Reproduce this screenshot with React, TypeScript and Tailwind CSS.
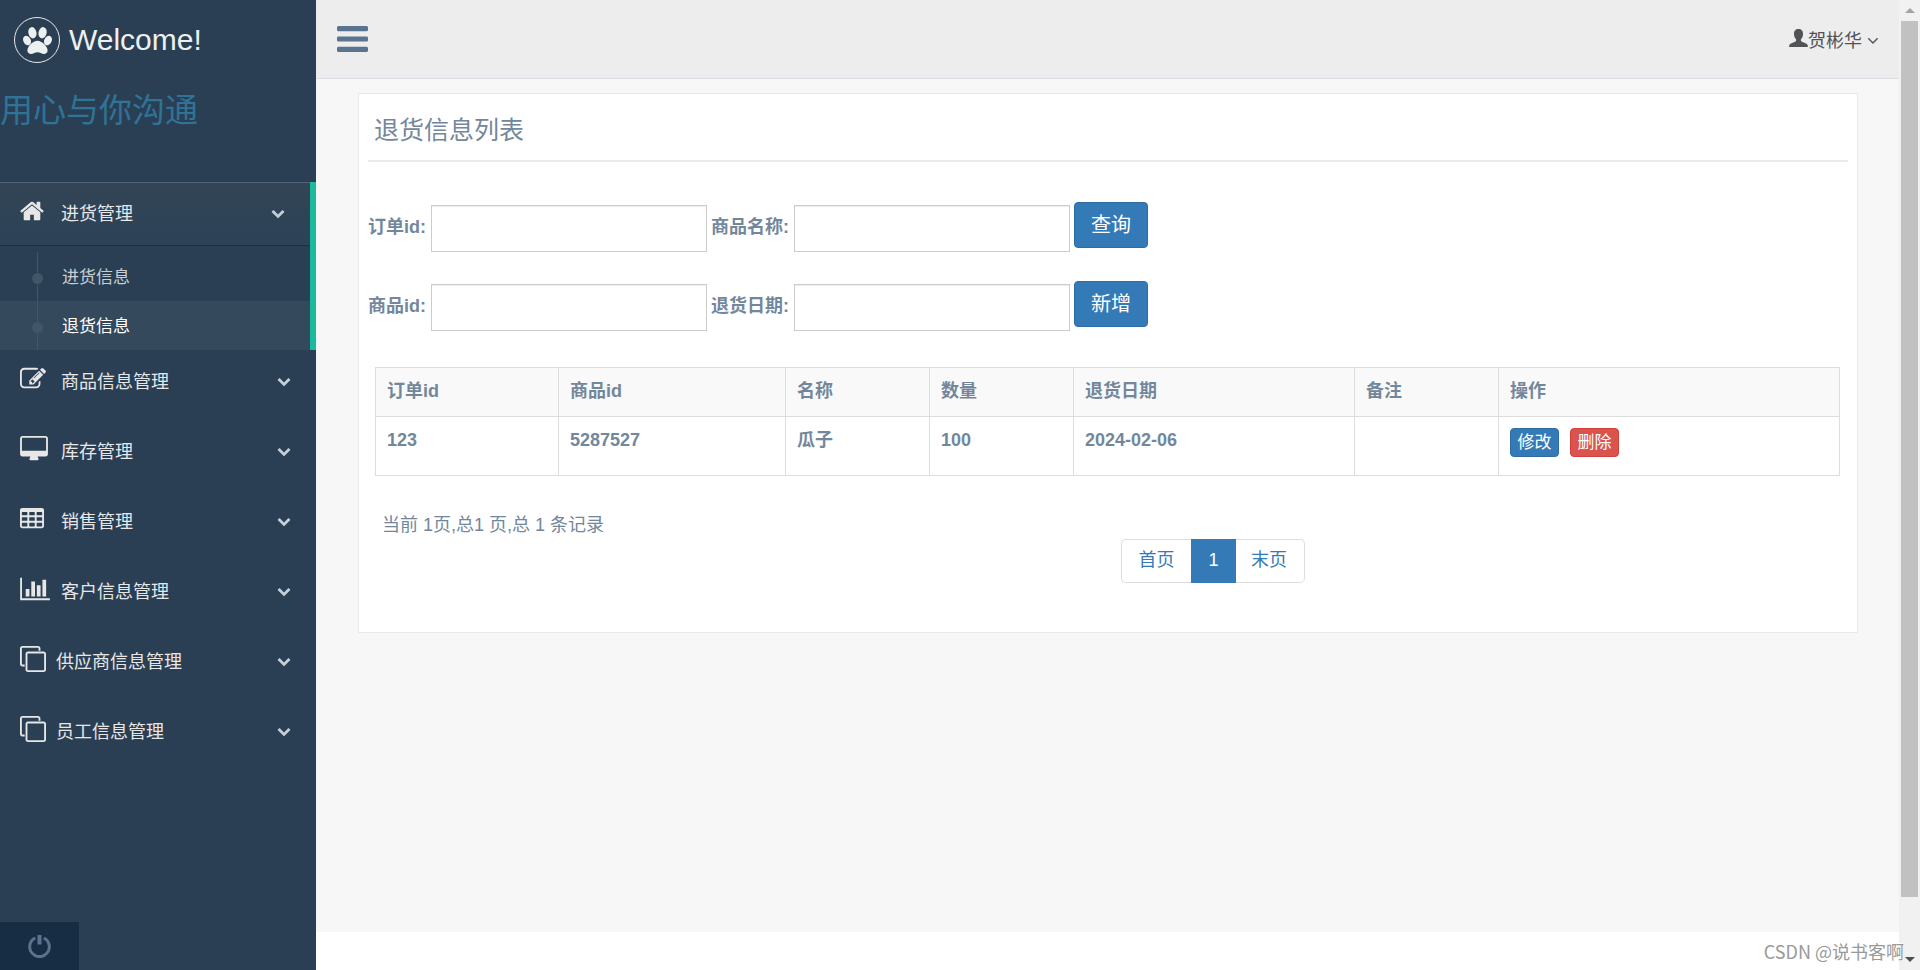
type Glyph = { viewBox: string; d: string };

const glyphs: Record<string, Glyph> = {
  home: {
    viewBox: "64 0 1664 1792",
    d: "M1472 992v480q0 26-19 45t-45 19h-384v-384h-256v384h-384q-26 0-45-19t-19-45v-480q0-1 .5-3t.5-3l575-474 575 474q1 2 1 6zm223-69l-62 74q-8 9-21 11h-3q-13 0-21-7l-692-577-692 577q-12 8-24 7-13-2-21-11l-62-74q-8-10-7-23.5t11-21.5l719-599q32-26 76-26t76 26l244 204v-195q0-14 9-23t23-9h192q14 0 23 9t9 23v408l219 182q10 8 11 21.5t-7 23.5z",
  },
  edit: {
    viewBox: "0 0 1792 1792",
    d: "M888 1184l116-116-152-152-116 116v56h96v96h56zm440-720q-16-16-33 1l-350 350q-17 17-1 33t33-1l350-350q17-17 1-33zm80 594v190q0 119-84.5 203.5t-203.5 84.5h-832q-119 0-203.5-84.5t-84.5-203.5v-832q0-119 84.5-203.5t203.5-84.5h832q63 0 117 25 15 7 18 23 3 17-9 29l-49 49q-14 14-32 8-23-6-45-6h-832q-66 0-113 47t-47 113v832q0 66 47 113t113 47h832q66 0 113-47t47-113v-126q0-13 9-22l64-64q15-15 35-7t20 29zm-96-738l288 288-672 672h-288v-288zm444 132l-92 92-288-288 92-92q28-28 68-28t68 28l152 152q28 28 28 68t-28 68z",
  },
  desktop: {
    viewBox: "0 0 1920 1792",
    d: "M1792 992v-832q0-13-9.5-22.5t-22.5-9.5h-1600q-13 0-22.5 9.5t-9.5 22.5v832q0 13 9.5 22.5t22.5 9.5h1600q13 0 22.5-9.5t9.5-22.5zm128-832v1088q0 66-47 113t-113 47h-544q0 37 16 77.5t32 71 16 43.5q0 26-19 45t-45 19h-512q-26 0-45-19t-19-45q0-14 16-44t32-70 16-78h-544q-66 0-113-47t-47-113v-1088q0-66 47-113t113-47h1600q66 0 113 47t47 113z",
  },
  table: {
    viewBox: "64 0 1664 1792",
    d: "M1728 288v1088q0 66-47 113t-113 47h-1344q-66 0-113-47t-47-113v-1088q0-66 47-113t113-47h1344q66 0 113 47t47 113zM192 448v160q0 32 32 32h320q32 0 32-32v-160q0-32-32-32h-320q-32 0-32 32zM704 448v160q0 32 32 32h320q32 0 32-32v-160q0-32-32-32h-320q-32 0-32 32zM1216 448v160q0 32 32 32h320q32 0 32-32v-160q0-32-32-32h-320q-32 0-32 32zM192 800v192q0 32 32 32h320q32 0 32-32v-192q0-32-32-32h-320q-32 0-32 32zM704 800v192q0 32 32 32h320q32 0 32-32v-192q0-32-32-32h-320q-32 0-32 32zM1216 800v192q0 32 32 32h320q32 0 32-32v-192q0-32-32-32h-320q-32 0-32 32zM192 1184v192q0 32 32 32h320q32 0 32-32v-192q0-32-32-32h-320q-32 0-32 32zM704 1184v192q0 32 32 32h320q32 0 32-32v-192q0-32-32-32h-320q-32 0-32 32zM1216 1184v192q0 32 32 32h320q32 0 32-32v-192q0-32-32-32h-320q-32 0-32 32z",
  },
  chart: {
    viewBox: "0 0 2048 1792",
    d: "M640 896v512h-256v-512h256zm384-512v1024h-256v-1024h256zm1024 1152v128h-2048v-1536h128v1408h1920zm-640-896v768h-256v-768h256zm384-384v1152h-256v-1152h256z",
  },
  clone: {
    viewBox: "0 0 1792 1792",
    d: "M1664 1632v-1088q0-13-9.5-22.5t-22.5-9.5h-1088q-13 0-22.5 9.5t-9.5 22.5v1088q0 13 9.5 22.5t22.5 9.5h1088q13 0 22.5-9.5t9.5-22.5zm128-1088v1088q0 66-47 113t-113 47h-1088q-66 0-113-47t-47-113v-1088q0-66 47-113t113-47h1088q66 0 113 47t47 113zm-384-384v160h-128v-160q0-13-9.5-22.5t-22.5-9.5h-1088q-13 0-22.5 9.5t-9.5 22.5v1088q0 13 9.5 22.5t22.5 9.5h160v128h-160q-66 0-113-47t-47-113v-1088q0-66 47-113t113-47h1088q66 0 113 47t47 113z",
  },
  chevron: {
    viewBox: "0 128 1792 1792",
    d: "M1683 808l-742 741q-19 19-45 19t-45-19l-742-741q-19-19-19-45.5t19-45.5l166-165q19-19 45-19t45 19l531 531 531-531q19-19 45-19t45 19l166 165q19 19 19 45.5t-19 45.5z",
  },
  angle: {
    viewBox: "407 676 988 559",
    d: "M1395 736q0 13-10 23l-466 466q-10 10-23 10t-23-10l-466-466q-10-10-10-23t10-23l50-50q10-10 23-10t23 10l393 393 393-393q10-10 23-10t23 10l50 50q10 10 10 23z",
  },
  bars: {
    viewBox: "128 256 1536 1280",
    d: "M1664 1344v128q0 26-19 45t-45 19h-1408q-26 0-45-19t-19-45v-128q0-26 19-45t45-19h1408q26 0 45 19t19 45zm0-512v128q0 26-19 45t-45 19h-1408q-26 0-45-19t-19-45v-128q0-26 19-45t45-19h1408q26 0 45 19t19 45zm0-512v128q0 26-19 45t-45 19h-1408q-26 0-45-19t-19-45v-128q0-26 19-45t45-19h1408q26 0 45 19t19 45z",
  },
  user: {
    viewBox: "0 0 19 18",
    d: "M9.500 0C12.400 0 14.200 2 14 5C14 7.500 13 9.200 12 10.300C11.700 11.800 12 12.300 13 12.800L17 14.600C18.400 15.300 18.900 16.200 18.900 18H.1C.1 16.200 .6 15.300 2 14.600L6 12.800C7 12.300 7.300 11.800 7 10.300C6 9.200 5 7.500 5 5C4.800 2 6.600 0 9.500 0Z",
  },
};

function Icon({ name, className }: { name: string; className: string }) {
  return (
    <svg aria-hidden="true" viewBox={glyphs[name].viewBox} fill="currentColor" fillRule="evenodd" className={className}>
      <path d={glyphs[name].d} />
    </svg>
  );
}

function Paw() {
  return (
    <svg aria-hidden="true" viewBox="0 0 86 80" fill="currentColor" className="h-[27px] w-[29px]">
      <ellipse cx="28" cy="17" rx="12" ry="17" transform="rotate(-12 28 17)" />
      <ellipse cx="58" cy="17" rx="12" ry="17" transform="rotate(12 58 17)" />
      <ellipse cx="12" cy="40" rx="11" ry="15" transform="rotate(-25 12 40)" />
      <ellipse cx="74" cy="40" rx="11" ry="15" transform="rotate(25 74 40)" />
      <path d="M43 41C56 41 73 57 73 70C73 77 68 80 62 80C55 80 50 75 43 75C36 75 31 80 24 80C18 80 13 77 13 70C13 57 30 41 43 41Z" />
    </svg>
  );
}

const menu = [
  { title: "商品信息管理", icon: "edit", iconClass: "h-[26px] w-[26px]", box: "w-[41px]" },
  { title: "库存管理", icon: "desktop", iconClass: "h-[26px] w-7", box: "w-[41px]" },
  { title: "销售管理", icon: "table", iconClass: "h-[26px] w-6", box: "w-[41px]" },
  { title: "客户信息管理", icon: "chart", iconClass: "h-[26px] w-[30px]", box: "w-[41px]" },
  { title: "供应商信息管理", icon: "clone", iconClass: "h-[26px] w-[26px]", box: "w-[36px]" },
  { title: "员工信息管理", icon: "clone", iconClass: "h-[26px] w-[26px]", box: "w-[36px]" },
];

const columns = [
  { title: "订单id", width: "w-[183px]" },
  { title: "商品id", width: "w-[227px]" },
  { title: "名称", width: "w-[144px]" },
  { title: "数量", width: "w-[144px]" },
  { title: "退货日期", width: "w-[281px]" },
  { title: "备注", width: "w-[144px]" },
  { title: "操作", width: "w-auto" },
];

const rows = [["123", "5287527", "瓜子", "100", "2024-02-06", ""]];

const searchRows = [
  { fields: [{ id: "orderId", label: "订单id:" }, { id: "goodsName", label: "商品名称:" }], action: "查询" },
  { fields: [{ id: "goodsId", label: "商品id:" }, { id: "returnDate", label: "退货日期:" }], action: "新增" },
];

function Sidebar() {
  return (
    <aside className="flex w-[316px] shrink-0 flex-col bg-[#2a3f54] text-[#e7e7e7]">
      <a href="#" className="flex items-center gap-[9px] pt-[17px] pl-3.5 text-[30px] leading-[46px] text-[#ecf0f1]">
        <span className="flex h-[46px] w-[46px] items-center justify-center rounded-full border border-[#eaeaea]">
          <Paw />
        </span>
        Welcome!
      </a>
      <h2 className="mt-[25px] text-[33px] leading-[46px] text-[#2f7396]">用心与你沟通</h2>
      <nav className="mt-12 text-lg">
        <div className="border-r-6 border-[#1abb9c]">
          <a
            href="#"
            className="flex h-[63px] items-center bg-linear-to-b from-[#334556] to-[#2c4257] pr-[25px] pl-5 shadow-[0_1px_0_rgba(0,0,0,0.25),inset_0_1px_0_rgba(255,255,255,0.16)]"
          >
            <span className="w-[41px] pb-1.5">
              <Icon name="home" className="h-[26px] w-6" />
            </span>
            <span className="flex-1">进货管理</span>
            <Icon name="chevron" className="h-3.5 w-3.5 text-[#c4cfda]" />
          </a>
          <ul className="mt-[7px] text-[17px]">
            <SubItem title="进货信息" className="text-white/75" />
            <SubItem title="退货信息" className="bg-white/5 text-white" />
          </ul>
        </div>
        {menu.map((item) => (
          <a key={item.title} href="#" className="mb-[7px] flex h-[63px] items-center pr-[25px] pl-5">
            <span className={`pb-1.5 ${item.box}`}>
              <Icon name={item.icon} className={item.iconClass} />
            </span>
            <span className="flex-1">{item.title}</span>
            <Icon name="chevron" className="h-3.5 w-3.5 text-[#c4cfda]" />
          </a>
        ))}
      </nav>
      <button type="button" aria-label="退出" className="mt-auto flex h-12 w-[79px] items-center justify-center bg-[#172d44] text-[#5a738e]">
        <svg aria-hidden="true" viewBox="0 0 23 23" fill="none" stroke="currentColor" className="h-[23px] w-[23px]">
          <path d="M7.200 3A9.800 9.800 0 1 0 15.800 3" strokeWidth="3" />
          <path d="M11.500 0V9.500" strokeWidth="4" />
        </svg>
      </button>
    </aside>
  );
}

function SubItem({ title, className }: { title: string; className: string }) {
  return (
    <li className={className}>
      <a href="#" className="flex h-[49px] items-center gap-[19px] pl-8">
        <span className="flex h-full w-[11px] flex-col items-center">
          <span className="h-[21px] w-px bg-[#425668]" />
          <span className="h-[11px] w-[11px] rounded-full bg-[#425668]" />
          <span className="w-px flex-1 bg-[#425668]" />
        </span>
        <span className="pt-[3px]">{title}</span>
      </a>
    </li>
  );
}

function SearchForm() {
  return (
    <form className="mt-10 space-y-[29px]">
      {searchRows.map((row) => (
        <div key={row.action} className="flex h-[50px] items-center gap-1">
          {row.fields.map((field) => (
            <div key={field.id} className="flex h-full items-center gap-[5px]">
              <label htmlFor={field.id} className="text-lg font-bold">
                {field.label}
              </label>
              <input
                id={field.id}
                type="text"
                className="h-[47px] w-[276px] self-end border border-[#ccc] bg-white px-4 text-lg shadow-[inset_0_1px_1px_rgba(0,0,0,0.075)]"
              />
            </div>
          ))}
          <button
            type="button"
            className="h-[46px] w-[74px] self-start rounded-[4px] border border-[#2e6da4] bg-[#337ab7] text-xl text-white"
          >
            {row.action}
          </button>
        </div>
      ))}
    </form>
  );
}

function ReturnTable() {
  return (
    <table className="w-full table-fixed border-collapse text-left text-lg font-bold">
      <thead className="bg-[#f9f9f9]">
        <tr className="h-[49px]">
          {columns.map((column) => (
            <th key={column.title} className={`border border-[#ddd] px-[11px] pb-0.5 ${column.width}`}>
              {column.title}
            </th>
          ))}
        </tr>
      </thead>
      <tbody>
        {rows.map((row) => (
          <tr key={row[0]} className="h-[59px] align-top">
            {row.map((cell, index) => (
              <td key={columns[index].title} className="border border-[#ddd] px-[11px] pt-2.5 leading-[26px]">
                {cell}
              </td>
            ))}
            <td className="border border-[#ddd] px-[11px] pt-[11px]">
              <div className="flex gap-[11px] text-[17px] font-normal text-white">
                <button type="button" className="h-[29px] w-[49px] rounded-[4px] border border-[#2e6da4] bg-[#337ab7] leading-[27px]">
                  修改
                </button>
                <button type="button" className="h-[29px] w-[49px] rounded-[4px] border border-[#d43f3a] bg-[#d9534f] leading-[27px]">
                  删除
                </button>
              </div>
            </td>
          </tr>
        ))}
      </tbody>
    </table>
  );
}

function Scrollbar() {
  return (
    <div aria-hidden="true" className="flex w-[21px] shrink-0 flex-col items-center bg-[#f1f1f1]">
      <div className="flex h-[21px] items-center">
        <svg viewBox="0 0 10 5" className="h-[5px] w-2.5 fill-[#a3a3a3]">
          <path d="M5 0L10 5H0Z" />
        </svg>
      </div>
      <div className="flex w-[17px] flex-1 flex-col">
        <div className="flex-17 bg-[#c1c1c1]" />
        <div className="flex-1" />
      </div>
      <div className="flex h-[21px] items-center">
        <svg viewBox="0 0 10 5" className="h-[5px] w-2.5 fill-[#505050]">
          <path d="M0 0H10L5 5Z" />
        </svg>
      </div>
    </div>
  );
}

export default function App() {
  return (
    <div className="relative flex min-h-screen bg-white font-['Liberation_Sans','Noto_Sans_CJK_SC',sans-serif] text-[#73879c]">
      <Sidebar />
      <div className="flex min-w-0 flex-1 flex-col">
        <header className="flex h-[79px] items-center justify-between border-b border-[#d9dee4] bg-[#ededed] px-[21px]">
          <button type="button" aria-label="菜单" className="text-[#5a738e]">
            <Icon name="bars" className="h-[26px] w-[31px]" />
          </button>
          <button type="button" className="flex items-center pt-[3px] text-lg text-[#515356]">
            <Icon name="user" className="mb-1.5 h-[18px] w-[19px]" />
            贺彬华
            <Icon name="angle" className="ml-1.5 h-1.5 w-2.5" />
          </button>
        </header>
        <main className="flex-1 bg-[#f7f7f7] pt-3.5 pr-[41px] pl-[42px]">
          <section className="border border-[#e6e9ed] bg-white px-[9px] pb-[49px]">
            <h2 className="border-b-2 border-[#e6e9ed] pt-[18px] pb-3 pl-1.5 text-[25px] leading-9">退货信息列表</h2>
            <SearchForm />
            <div className="mt-9 pr-2 pl-[7px]">
              <ReturnTable />
            </div>
            <div className="flex pt-9 pr-[26px] pl-3.5">
              <p className="text-lg leading-[26px]">当前 1页,总1 页,总 1 条记录</p>
              <nav aria-label="分页" className="mt-[27px] flex flex-1 justify-center text-lg leading-10 text-[#337ab7]">
                <a href="#" className="h-11 w-[70px] rounded-l-[5px] border border-r-0 border-[#ddd] text-center">
                  首页
                </a>
                <a href="#" aria-current="page" className="h-11 w-[45px] border border-[#337ab7] bg-[#337ab7] text-center text-white">
                  1
                </a>
                <a href="#" className="h-11 w-[69px] rounded-r-[5px] border border-l-0 border-[#ddd] pr-0.5 text-center">
                  末页
                </a>
              </nav>
            </div>
          </section>
        </main>
        <footer className="h-[38px] bg-white" />
      </div>
      <Scrollbar />
      <p className="absolute right-4 bottom-[7px] font-['Noto_Sans_CJK_SC',sans-serif] text-lg leading-6 text-[#999] [text-shadow:-1px_-1px_0_#fff]">
        CSDN @说书客啊
      </p>
    </div>
  );
}
